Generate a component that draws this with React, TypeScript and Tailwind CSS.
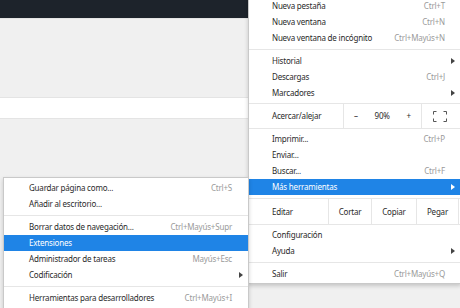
import React from "react";

interface MenuItem {
  label: string;
  shortcut?: string;
  arrow?: boolean;
  active?: boolean;
}

// Little black triangle used for items that open a submenu
const Arrow: React.FC<{ light?: boolean }> = ({ light = false }) => (
  <svg width="4" height="6" viewBox="0 0 4 6" className="shrink-0">
    <path d="M0 0 L4 3 L0 6 Z" fill={light ? "#ffffff" : "#444444"} />
  </svg>
);

const FullscreenIcon: React.FC = () => (
  <svg width="14" height="11" viewBox="0 0 14 11" fill="none" stroke="#555" strokeWidth="1">
    <path d="M0.5 3.5 V0.5 H3.5" />
    <path d="M10.5 0.5 H13.5 V3.5" />
    <path d="M13.5 7.5 V10.5 H10.5" />
    <path d="M3.5 10.5 H0.5 V7.5" />
  </svg>
);

const Row: React.FC<MenuItem & { padLeft: string; padRight: string }> = ({
  label,
  shortcut,
  arrow,
  active,
  padLeft,
  padRight,
}) => (
  <div
    className={`flex h-[16px] items-center justify-between ${padLeft} ${padRight} ${
      active ? "bg-[#1f84e6] text-white" : "text-[#2a2a2a]"
    }`}
  >
    <span className="whitespace-nowrap">{label}</span>
    {shortcut && <span className="whitespace-nowrap text-[#9a9a9a]">{shortcut}</span>}
    {arrow && <Arrow light={active} />}
  </div>
);

const Separator: React.FC = () => (
  <div className="py-[3px]">
    <div className="h-px bg-[#e6e6e6]" />
  </div>
);

const MainRow: React.FC<MenuItem> = (props) => (
  <Row {...props} padLeft="pl-[23px]" padRight={props.arrow ? "pr-[5px]" : "pr-[15px]"} />
);

const SubRow: React.FC<MenuItem> = (props) => (
  <Row {...props} padLeft="pl-[25px]" padRight={props.arrow ? "pr-[5px]" : "pr-[16px]"} />
);

const group1: MenuItem[] = [
  { label: "Nueva pestaña", shortcut: "Ctrl+T" },
  { label: "Nueva ventana", shortcut: "Ctrl+N" },
  { label: "Nueva ventana de incógnito", shortcut: "Ctrl+Mayús+N" },
];

const group2: MenuItem[] = [
  { label: "Historial", arrow: true },
  { label: "Descargas", shortcut: "Ctrl+J" },
  { label: "Marcadores", arrow: true },
];

const group3: MenuItem[] = [
  { label: "Imprimir...", shortcut: "Ctrl+P" },
  { label: "Enviar..." },
  { label: "Buscar...", shortcut: "Ctrl+F" },
  { label: "Más herramientas", arrow: true, active: true },
];

const group4: MenuItem[] = [
  { label: "Configuración" },
  { label: "Ayuda", arrow: true },
];

const subGroup1: MenuItem[] = [
  { label: "Guardar página como...", shortcut: "Ctrl+S" },
  { label: "Añadir al escritorio..." },
];

const subGroup2: MenuItem[] = [
  { label: "Borrar datos de navegación...", shortcut: "Ctrl+Mayús+Supr" },
  { label: "Extensiones", active: true },
  { label: "Administrador de tareas", shortcut: "Mayús+Esc" },
  { label: "Codificación", arrow: true },
];

const App: React.FC = () => {
  return (
    <div
      className="relative h-[308px] w-[460px] overflow-hidden bg-[#f0f0f0] text-[8px] tracking-[-0.2px]"
      style={{ fontFamily: '"Noto Sans", "Open Sans", sans-serif' }}
    >
      {/* Page behind the menus */}
      <div className="flex flex-col">
        <div className="h-[18px] bg-[#1d232b]" />
        <div className="h-[79px] border-t border-[#e4e4e4] bg-[#f0f0f0]" />
        <div className="h-[22px] border-y border-[#e4e4e4] bg-white" />
        <div className="h-[189px] bg-[#f0f0f0]" />
      </div>

      {/* Main Chrome menu */}
      <div className="absolute left-[248px] top-[-3px] w-[213px] border border-[#c9c9c9] bg-white pb-[1px] shadow-[0_2px_4px_rgba(0,0,0,0.18)]">
        {group1.map((item) => (
          <MainRow key={item.label} {...item} />
        ))}
        <Separator />
        {group2.map((item) => (
          <MainRow key={item.label} {...item} />
        ))}

        {/* Zoom row */}
        <div className="mt-[2px] flex h-[26px] items-stretch border-y border-[#e6e6e6]">
          <div className="flex w-[94px] items-center pl-[23px] text-[#2a2a2a]">Acercar/alejar</div>
          <div className="flex w-[79px] items-center justify-between border-x border-[#e6e6e6] px-[10px] text-[#2a2a2a]">
            <span>–</span>
            <span>90%</span>
            <span>+</span>
          </div>
          <div className="flex flex-1 items-center justify-center pr-[2px]">
            <FullscreenIcon />
          </div>
        </div>

        <div className="pt-[2px]">
          {group3.map((item) => (
            <MainRow key={item.label} {...item} />
          ))}
        </div>

        {/* Edit row */}
        <div className="mt-[3px] flex h-[27px] items-stretch border-y border-[#e6e6e6] text-[#2a2a2a]">
          <div className="flex w-[79px] items-center pl-[23px]">Editar</div>
          <div className="flex w-[43px] items-center justify-center border-l border-[#e6e6e6]">Cortar</div>
          <div className="flex w-[45px] items-center justify-center border-l border-[#e6e6e6]">Copiar</div>
          <div className="flex w-[43px] items-center justify-center border-x border-[#e6e6e6]">Pegar</div>
        </div>

        <div className="pt-[2px]">
          {group4.map((item) => (
            <MainRow key={item.label} {...item} />
          ))}
        </div>
        <Separator />
        <MainRow label="Salir" shortcut="Ctrl+Mayús+Q" />
      </div>

      {/* "Más herramientas" submenu */}
      <div className="absolute left-[3px] top-[177px] w-[246px] border border-[#c9c9c9] bg-white py-[2px] shadow-[0_2px_4px_rgba(0,0,0,0.18)]">
        {subGroup1.map((item) => (
          <SubRow key={item.label} {...item} />
        ))}
        <Separator />
        {subGroup2.map((item) => (
          <SubRow key={item.label} {...item} />
        ))}
        <Separator />
        <SubRow label="Herramientas para desarrolladores" shortcut="Ctrl+Mayús+I" />
      </div>
    </div>
  );
};

export default App;
